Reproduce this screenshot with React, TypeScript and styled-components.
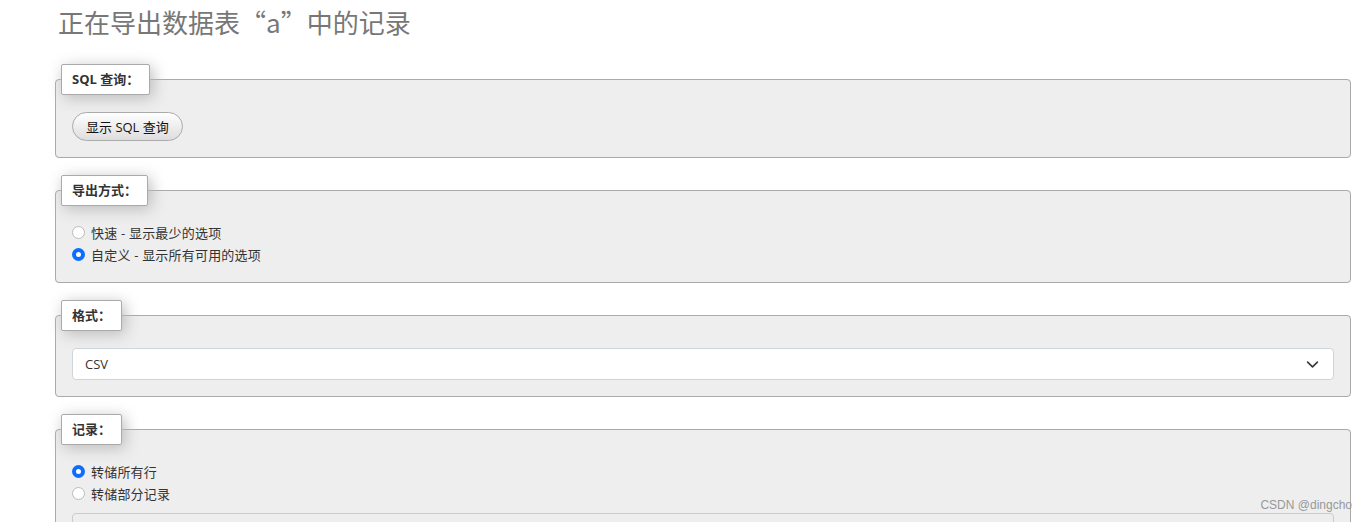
import styled, { createGlobalStyle } from 'styled-components';

const GlobalStyle = createGlobalStyle`
    html, body {
        margin: 0;
        padding: 0;
        background: #fff;
        overflow: hidden;
    }
    body {
        font-family: "Open Sans", "Noto Sans CJK SC", sans-serif;
        font-size: 13px;
        color: #333;
    }
`;

const Page = styled.div`
    position: relative;
    height: 522px;
    padding: 0 15px 0 55px;
`;

const Title = styled.h2`
    margin: 0;
    padding: 5px 0 0 3px;
    height: 64px;
    box-sizing: border-box;
    font-family: "Noto Sans CJK SC", sans-serif;
    font-weight: normal;
    font-size: 26px;
    line-height: 34px;
    color: #777;
`;

const Fieldset = styled.fieldset<{ $bottom?: number }>`
    margin: 0 0 17px;
    padding: 16px 16px ${(p) => p.$bottom ?? 16}px;
    min-width: 0;
    background: #eee;
    border: 1px solid #aaa;
    border-radius: 4px;
`;

const Legend = styled.legend`
    margin-left: -11px;
    padding: 5px 10px;
    background: #fff;
    border: 1px solid #aaa;
    border-radius: 2px;
    box-shadow: 3px 3px 15px #bbb;
    font-weight: bold;
    font-size: 13px;
    line-height: 19px;
    color: #333;
`;

const PillButton = styled.button`
    height: 29px;
    padding: 0 13px;
    margin-top: 1px;
    border: 1px solid #aaa;
    border-radius: 20px;
    background: linear-gradient(#fff, #ddd);
    font-family: "Open Sans", "Noto Sans CJK SC", sans-serif;
    font-size: 13px;
    color: #111;
    cursor: pointer;
`;

const RadioList = styled.div`
    display: flex;
    flex-direction: column;
`;

const RadioRow = styled.label`
    display: flex;
    align-items: center;
    gap: 6px;
    height: 21.5px;
    font-size: 13px;
    letter-spacing: 0.2px;
    color: #333;
`;

const RadioDot = styled.span<{ checked?: boolean }>`
    width: 13px;
    height: 13px;
    box-sizing: border-box;
    border-radius: 50%;
    background: #fff;
    border: ${(p) => (p.checked ? '4px solid #0d6efd' : '1px solid #bbb')};
`;

const SelectBox = styled.div`
    display: flex;
    align-items: center;
    justify-content: space-between;
    height: 32px;
    margin-top: 1px;
    padding: 0 14px 0 12px;
    box-sizing: border-box;
    background: #fff;
    border: 1px solid #ced4da;
    border-radius: 4px;
    font-size: 13px;
    color: #333;
`;

const TextBox = styled.div`
    height: 32px;
    margin-top: 9px;
    background: #eee;
    border: 1px solid #ccc;
    border-radius: 4px;
`;

const Watermark = styled.div`
    position: absolute;
    right: 14px;
    top: 498px;
    font-family: "Liberation Sans", Arial, sans-serif;
    font-size: 12px;
    color: #999;
`;

const Chevron = () => (
    <svg width="13" height="13" viewBox="0 0 16 16" fill="none">
        <path d="M2 5l6 6 6-6" stroke="#343a40" strokeWidth="2" strokeLinecap="round" strokeLinejoin="round" />
    </svg>
);

type RadioProps = { label: string; checked?: boolean };
const Radio = ({ label, checked }: RadioProps) => (
    <RadioRow>
        <RadioDot checked={checked} />
        {label}
    </RadioRow>
);

const App = () => {
    return (
        <>
            <GlobalStyle />
            <Page>
                <Title>正在导出数据表“a”中的记录</Title>

                <Fieldset>
                    <Legend>SQL 查询：</Legend>
                    <PillButton>显示 SQL 查询</PillButton>
                </Fieldset>

                <Fieldset $bottom={17}>
                    <Legend>导出方式：</Legend>
                    <RadioList>
                        <Radio label="快速 - 显示最少的选项" />
                        <Radio label="自定义 - 显示所有可用的选项" checked />
                    </RadioList>
                </Fieldset>

                <Fieldset>
                    <Legend>格式：</Legend>
                    <SelectBox>
                        <span>CSV</span>
                        <Chevron />
                    </SelectBox>
                </Fieldset>

                <Fieldset>
                    <Legend>记录：</Legend>
                    <RadioList>
                        <Radio label="转储所有行" checked />
                        <Radio label="转储部分记录" />
                    </RadioList>
                    <TextBox />
                </Fieldset>

                <Watermark>CSDN @dingcho</Watermark>
            </Page>
        </>
    );
};

export default App;
